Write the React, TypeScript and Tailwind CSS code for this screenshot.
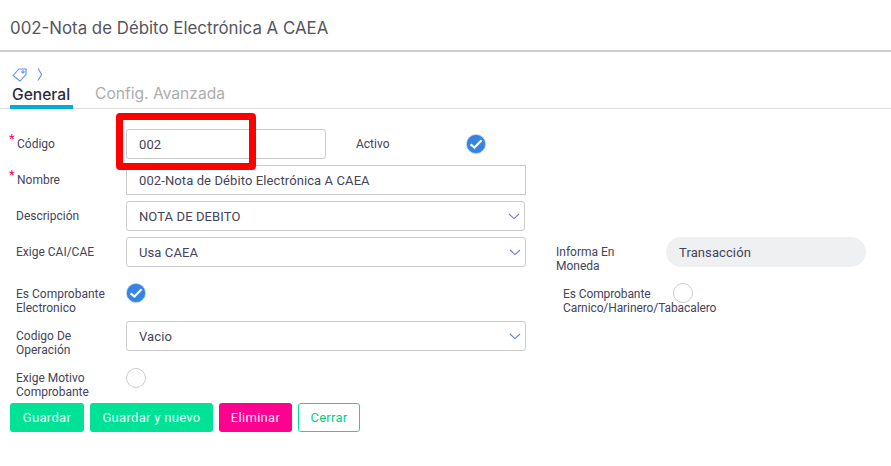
import React from 'react';

const labelCls = "text-[12px] leading-[14px] text-[#44445a] font-['Roboto',sans-serif]";
const fieldCls = "h-[30px] flex items-center pl-[12px] pt-[1px] bg-white border border-[#cccccc] text-[13px] tracking-[0.1px] text-[#44445a] font-['Roboto',sans-serif]";

const Check: React.FC<{ on?: boolean }> = ({ on }) =>
  on ? (
    <svg width="20" height="20" viewBox="0 0 20 20" className="block">
      <circle cx="10" cy="10" r="9.6" fill="#3584e4" stroke="#c9d6e8" strokeWidth="0.8" />
      <path d="M4.6 10.4l3.800 3.200L15.600 6.200" fill="none" stroke="#fff" strokeWidth="2.200" />
    </svg>
  ) : (
    <div className="w-5 h-5 rounded-full border border-[#cccccc] bg-white" />
  );

const Field: React.FC<{ label: string; required?: boolean; top?: boolean; children: React.ReactNode }> = ({ label, required, top, children }) => (
  <div className="flex items-center h-[30px]">
    <div className={`relative w-[116px] ${required ? 'pl-[7px]' : 'pl-[6px]'} ${top ? 'self-start pt-[8px]' : ''} ${labelCls}`}>
      {required && <span className="absolute -left-[1px] -top-[5px] text-[#ff0060] text-[13px]">*</span>}
      {label}
    </div>
    {children}
  </div>
);

const Select: React.FC<{ value: string; className: string; chevron: string }> = ({ value, className, chevron }) => (
  <div className={`${fieldCls} ${className} justify-between pr-[4px] rounded-[3px]`}>
    <span>{value}</span>
    <svg width="12" height="7" viewBox="0 0 12 7" fill="none" stroke={chevron} strokeWidth="1.1">
      <path d="M1 1l5 4.600L11 1" />
    </svg>
  </div>
);

export default function App() {
  return (
    <div className="relative w-[891px] h-[466px] bg-white overflow-hidden">
      <div className="h-[52px] pl-[10px] pt-[17px] border-b-2 border-[#cfcfd2]">
        <h1 className="text-[16.85px] leading-[22px] text-[#55555f] font-['Inter',sans-serif]">002-Nota de Débito Electrónica A CAEA</h1>
      </div>

      <div className="pl-[12px] pt-[15px] flex items-start gap-[9px] h-[31px]">
        <svg width="16" height="15" viewBox="0 0 16 15" fill="none" stroke="#5b8def" strokeWidth="1.1">
          <path d="M1 8.500l6-6.500H14V7.500L8 14z" />
          <circle cx="11" cy="4.800" r="1.100" />
        </svg>
        <svg width="6" height="15" viewBox="0 0 6 15" fill="none" stroke="#5b8def" strokeWidth="1.1">
          <path d="M1 1.500l3.600 6L1 13.500" />
        </svg>
      </div>

      <div className="flex items-end h-[26px] pl-[10px] border-b border-[#dddddd] text-[15.6px] leading-[22px] font-['Inter',sans-serif]">
        <div className="w-[63px] h-[26px] -mb-px pt-[1px] pl-[2px] border-b-[4px] border-[#00acd0] text-[#2c2c40] font-medium">General</div>
        <div className="ml-[22px] h-[26px] pt-[1px] text-[#adadad]">Config. Avanzada</div>
      </div>

      <div className="pl-[10px] pt-[20px] flex flex-col gap-[6px]">
        <Field label="Código" required>
          <div className={`${fieldCls} w-[200px] rounded-[3px]`}>002</div>
          <div className={`${labelCls} ml-[30px] w-[110px]`}>Activo</div>
          <Check on />
        </Field>
        <Field label="Nombre" required>
          <div className={`${fieldCls} w-[400px]`}>002-Nota de Débito Electrónica A CAEA</div>
        </Field>
        <Field label="Descripción">
          <Select value="NOTA DE DEBITO" className="w-[399px]" chevron="#8b6cf5" />
        </Field>
        <Field label="Exige CAI/CAE">
          <Select value="Usa CAEA" className="w-[400px]" chevron="#5f7fe0" />
          <div className={`${labelCls} ml-[30px] w-[110px] self-start pt-[8px] pr-[40px]`}>Informa En Moneda</div>
          <div className="h-[30px] w-[200px] rounded-[15px] bg-[#eff0f2] flex items-center pl-[13px] pt-[1px] text-[13px] tracking-[0.1px] text-[#44445a] font-['Roboto',sans-serif]">Transacción</div>
        </Field>
        <div className="flex items-start h-[42px] pt-[10px]">
          <div className={`w-[116px] pl-[6px] ${labelCls} pt-[4px]`}>Es Comprobante Electronico</div>
          <Check on />
          <div className={`${labelCls} ml-[417px] w-[110px] pt-[4px] whitespace-nowrap tracking-[-0.1px]`}>Es Comprobante<br />Carnico/Harinero/Tabacalero</div>
          <Check />
        </div>
        <Field label="Codigo De Operación" top>
          <Select value="Vacio" className="w-[400px]" chevron="#5f7fe0" />
        </Field>
        <div className="flex items-start h-[36px] pt-[11px]">
          <div className={`w-[116px] pl-[6px] ${labelCls} pt-[3px]`}>Exige Motivo Comprobante</div>
          <Check />
        </div>
      </div>

      <div className="pl-[10px] pt-[10px] flex gap-[6px] text-[13px] tracking-[0.3px] font-['Roboto',sans-serif]">
        <button className="h-[29px] w-[74px] rounded-[3px] bg-[#00e396] text-[#e6fff6]">Guardar</button>
        <button className="h-[29px] w-[123px] rounded-[3px] bg-[#00e396] text-[#e6fff6]">Guardar y nuevo</button>
        <button className="h-[29px] w-[73px] rounded-[3px] bg-[#ff0090] text-[#ffe6f4]">Eliminar</button>
        <button className="h-[29px] w-[62px] rounded-[3px] bg-white border border-[#00e396] text-[#00d08a]">Cerrar</button>
      </div>

      <div className="absolute left-[116px] top-[113px] w-[140px] h-[57px] border-[7px] border-[#ff0000] rounded-[4px]" />
    </div>
  );
}
